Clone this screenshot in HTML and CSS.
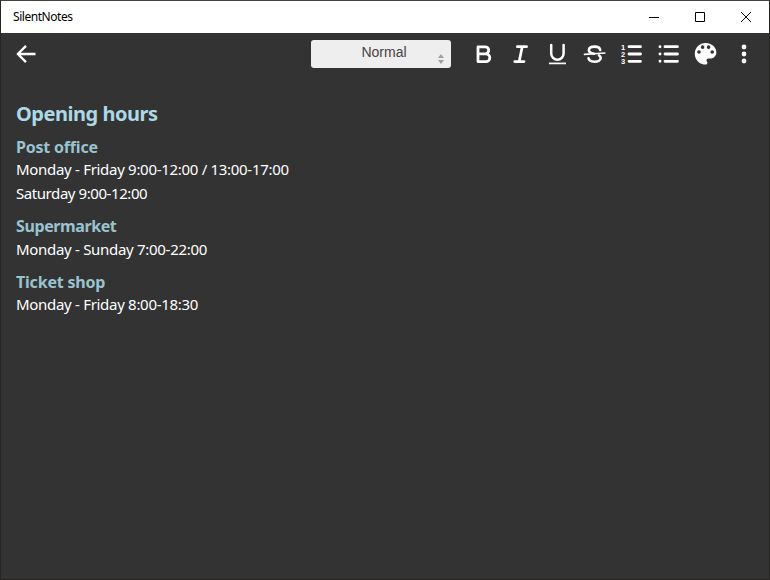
FILE: index.html
```html
<!DOCTYPE html>
<html lang="en">
<head>
<meta charset="utf-8">
<title>SilentNotes</title>
<link rel="stylesheet" href="styles.css">
</head>
<body>
<div class="window">
  <header class="titlebar">
    <span class="app-name">SilentNotes</span>
    <div class="controls">
      <svg class="control" viewBox="0 0 46 32"><path d="M18 16.5h10"/></svg>
      <svg class="control" viewBox="0 0 46 32"><path d="M18.5 11.5h9v9h-9z"/></svg>
      <svg class="control" viewBox="0 0 46 32"><path d="M18 11l10 10M28 11l-10 10"/></svg>
    </div>
  </header>
  <nav class="toolbar">
    <svg class="icon" viewBox="0 0 24 24"><path d="M21.5 12H4M12 3.800L3.800 12l8.200 8.200" stroke-width="2.400" stroke-linecap="butt"/></svg>
    <div class="select">
      <span>Normal</span>
      <svg class="arrows" viewBox="0 0 6 10"><path d="M0 4l3-4 3 4zM0 6l3 4 3-4z"/></svg>
    </div>
    <div class="tools">
      <svg class="icon" viewBox="0 0 24 24"><path d="M7 4.800h7.200a3.500 3.500 0 0 1 0 7H7zM7 11.800h7.900a3.900 3.900 0 0 1 0 7.800H7z" stroke-width="2.800"/></svg>
      <svg class="icon" viewBox="0 0 24 24"><path d="M9.300 4.700h9.300M6.700 19.600H16M14.200 4.700l-3 14.900" stroke-width="2.700"/></svg>
      <svg class="icon" viewBox="0 0 24 24"><path d="M6.200 3v8.500a6.200 6.200 0 0 0 12.400 0V3" stroke-width="2.500"/><path d="M4 21.400h17" stroke-width="1.700" stroke-linecap="butt"/></svg>
      <svg class="icon" viewBox="0 0 24 24"><path d="M18.200 8C17.800 5.700 15.600 4.600 12.600 4.600S6.900 5.800 6.900 8.200C6.900 10.200 9 11.200 12 11.700M6.500 16.200C6.800 18.500 9.300 19.700 12.500 19.700S18.700 18.400 18.700 16.100C18.700 14.900 18.200 14 17 13.300" stroke-width="2.600"/><path d="M2.500 12.400l20.300-1.400" stroke-width="1.700"/></svg>
      <svg class="icon" viewBox="0 0 24 24"><path d="M10 4.700h11.500M10 12h11.500M10 19.300h11.500" stroke-width="2.800"/><g class="digits"><text x="1.900" y="7.500">1</text><text x="1.900" y="14.800">2</text><text x="1.900" y="22.100">3</text></g></svg>
      <svg class="icon" viewBox="0 0 24 24"><path d="M9 4.700h12.500M9 12h12.500M9 19.300h12.500" stroke-width="2.800"/><path d="M4 4.700h.01M4 12h.01M4 19.300h.01" stroke-width="2.900"/></svg>
      <svg class="icon palette" viewBox="1.500 2.200 20 20"><path d="M12 3a9 9 0 0 0 0 18c.83 0 1.500-.67 1.500-1.500 0-.39-.15-.74-.39-1.010-.23-.26-.38-.61-.38-.99 0-.83.67-1.500 1.500-1.500H16c2.760 0 5-2.240 5-5 0-4.420-4.030-8-9-8zm-5.500 9a1.500 1.500 0 1 1 0-3 1.500 1.500 0 0 1 0 3zm3-4a1.500 1.500 0 1 1 0-3 1.500 1.500 0 0 1 0 3zm5 0a1.500 1.500 0 1 1 0-3 1.500 1.500 0 0 1 0 3zm3 4a1.500 1.500 0 1 1 0-3 1.500 1.500 0 0 1 0 3z"/></svg>
      <svg class="icon more" viewBox="0 0 24 24"><path d="M12 5h.01M12 12h.01M12 19h.01" stroke-width="4.800"/></svg>
    </div>
  </nav>
  <main class="note">
    <h1>Opening hours</h1>
    <h2 class="post">Post office</h2>
    <p class="hours-a">Monday - Friday 9:00-12:00 / 13:00-17:00</p>
    <p class="hours-b">Saturday 9:00-12:00</p>
    <h2 class="market">Supermarket</h2>
    <p class="hours-c">Monday - Sunday 7:00-22:00</p>
    <h2 class="ticket">Ticket shop</h2>
    <p class="hours-d">Monday - Friday 8:00-18:30</p>
  </main>
</div>
</body>
</html>
```
FILE: styles.css
```css
* { box-sizing: border-box; }
body { margin: 0; background: #333; font-family: "Noto Sans", "Open Sans", sans-serif; }
.window {
  width: 770px;
  height: 580px;
  border: 1px solid #272524;
  border-top-color: #45423f;
  background: #333;
  overflow: hidden;
}
.titlebar {
  display: flex;
  justify-content: space-between;
  height: 32px;
  background: #fff;
  color: #000;
}
.app-name { padding-left: 12px; font-size: 12px; line-height: 31px; letter-spacing: -0.45px; white-space: nowrap; }
.controls { display: flex; }
.control { width: 46px; height: 32px; fill: none; stroke: #000; stroke-width: 1; }
.toolbar { display: flex; align-items: center; height: 42px; padding-left: 13px; }
.icon {
  flex: none;
  width: 24px;
  height: 24px;
  fill: none;
  stroke: #fff;
  stroke-linecap: round;
  stroke-linejoin: round;
}
.digits { fill: #fff; stroke: none; font: bold 7.5px "Liberation Sans", Arial, sans-serif; }
.palette { fill: #fff; stroke: none; }
.select {
  display: flex;
  justify-content: center;
  position: relative;
  width: 140px;
  height: 28px;
  margin-left: 273px;
  border-radius: 3px;
  background: #eee;
  color: #444;
  font: 14px/25px "Liberation Sans", Arial, sans-serif;
}
.select span { padding-left: 6px; }
.arrows { position: absolute; right: 7px; top: 14px; width: 6px; height: 10px; fill: #a0a0a0; }
.tools { display: flex; gap: 13px; margin-left: 20px; }
.more { margin-left: 2px; }
.note { padding: 25px 15px 0; color: #fff; }
h1, h2, p { margin: 0; white-space: nowrap; width: max-content; }
h1 { color: #add8e6; font-size: 20px; line-height: 28px; letter-spacing: -0.47px; }
h2 { color: #9ac2cf; font-size: 16px; line-height: 24px; letter-spacing: -0.2px; }
p { font-size: 15px; line-height: 24px; letter-spacing: -0.3px; }
.post { margin-top: 7px; }
.hours-a { margin-top: -2px; }
.hours-b { letter-spacing: -0.43px; }
.hours-c { margin-top: -1px; }
.hours-d { margin-top: -2px; }
.market, .ticket { margin-top: 9px; }
.market { letter-spacing: -0.4px; }
```
